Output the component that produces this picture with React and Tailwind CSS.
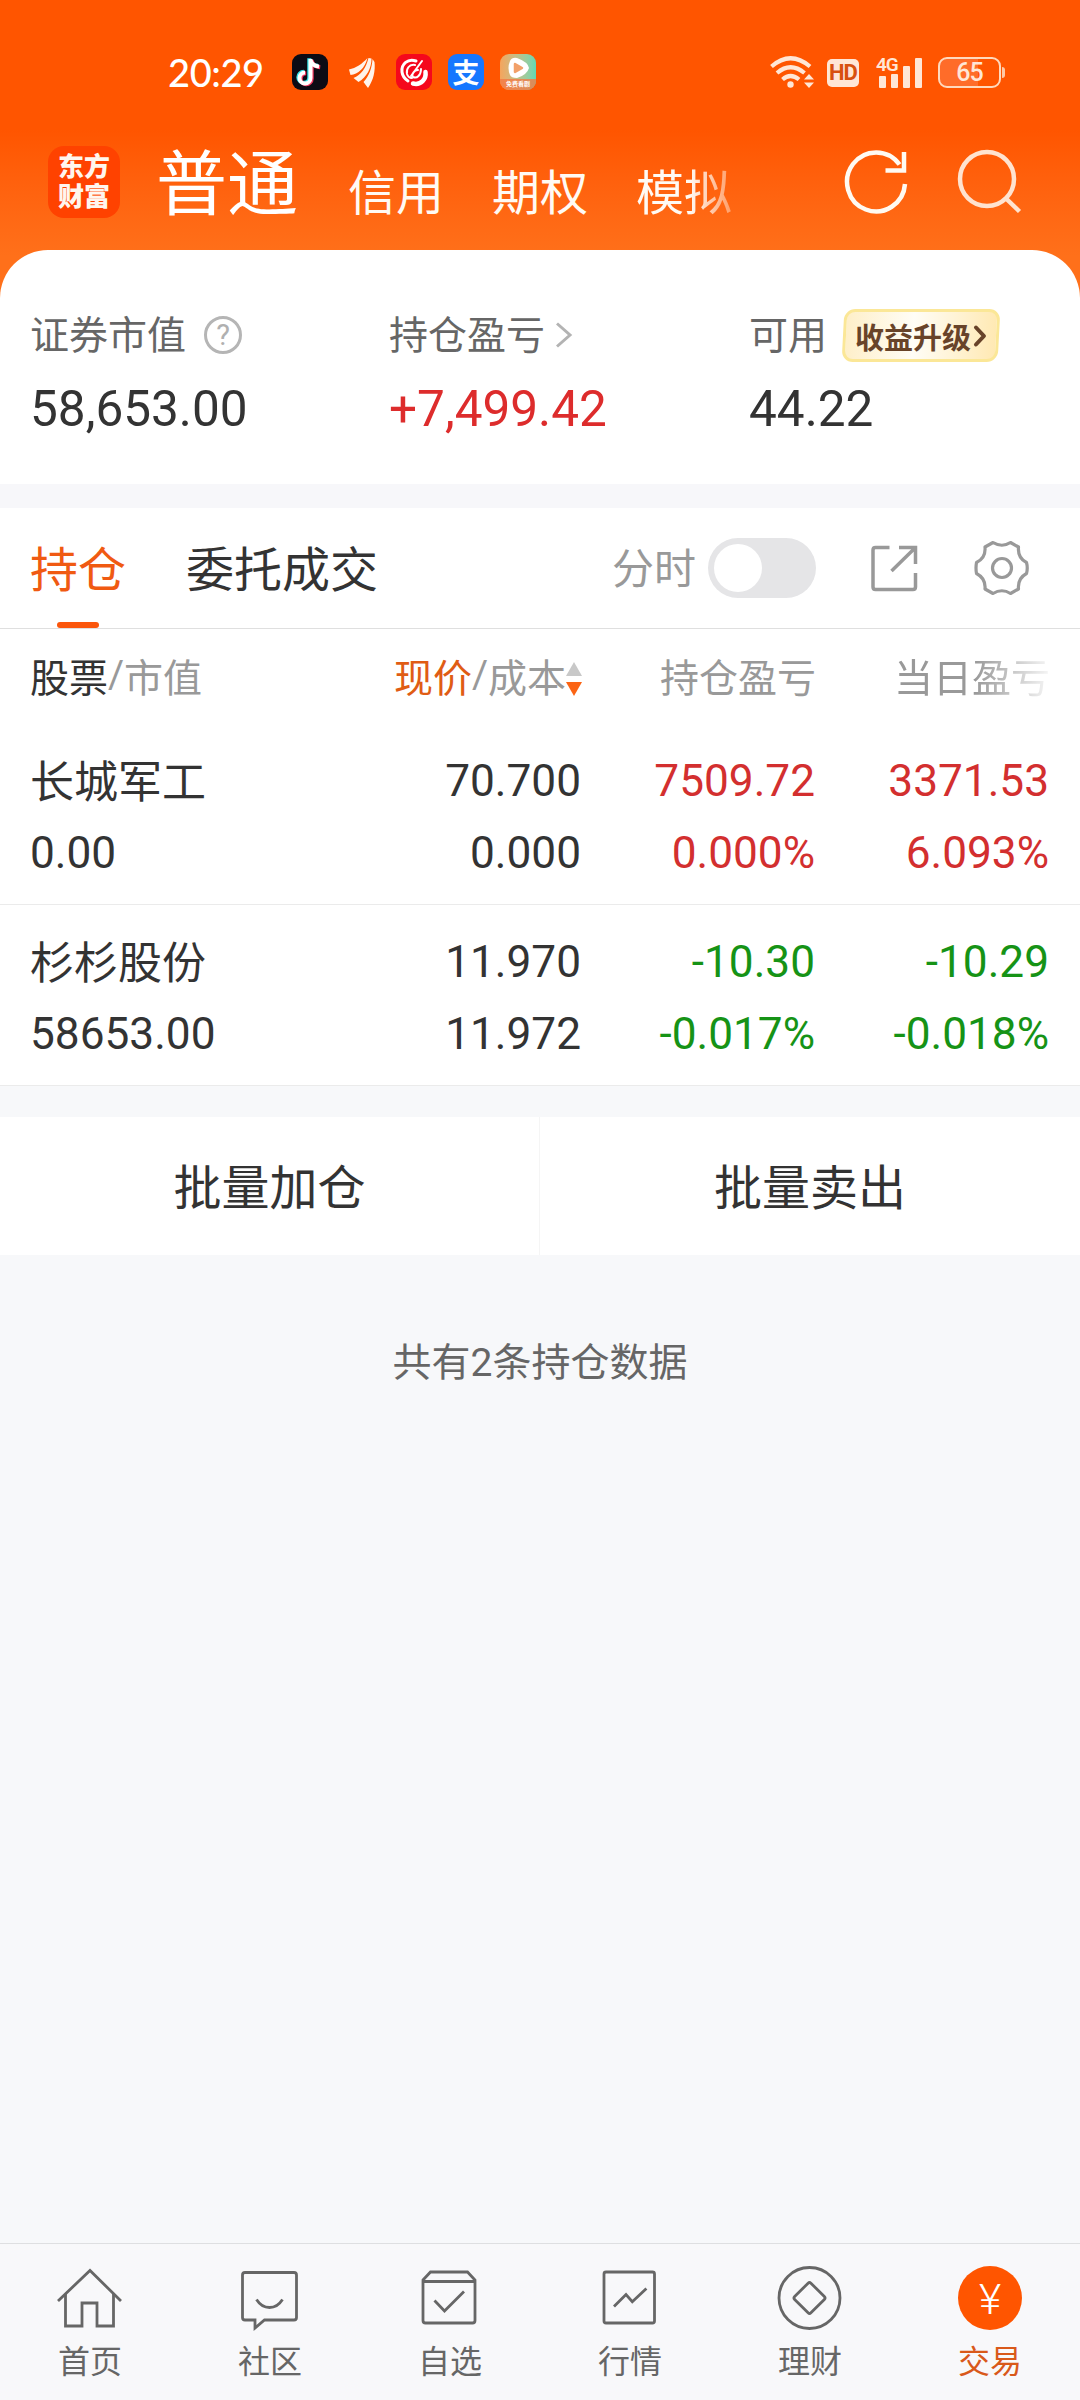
import React, { useState } from 'react';

const holdings = [
  {
    name: '长城军工',
    value: '0.00',
    price: '70.700',
    cost: '0.000',
    profit: '7509.72',
    profitRate: '0.000%',
    day: '3371.53',
    dayRate: '6.093%',
    up: true,
  },
  {
    name: '杉杉股份',
    value: '58653.00',
    price: '11.970',
    cost: '11.972',
    profit: '-10.30',
    profitRate: '-0.017%',
    day: '-10.29',
    dayRate: '-0.018%',
    up: false,
  },
];

function StatusBar() {
  return (
    <div className="flex h-[144px] items-center pl-[168px]">
      <span className="w-[124px] font-[Lato,sans-serif] text-[38px] leading-none font-medium tracking-[-0.4px] text-white">20:29</span>

      <div className="flex items-center">
        <div className="h-9 w-9 rounded-[9px] bg-[#0c0b14]">
          <svg viewBox="0 0 36 36" className="h-9 w-9" fill="none" strokeWidth="4">
            <path d="M18.500 5v19a5.500 5.500 0 1 1-5.500-5.500M18.500 6c1 4 4 6 8.500 6.500" stroke="#35e4e8" transform="translate(-1.200 -.8)" />
            <path d="M18.500 5v19a5.500 5.500 0 1 1-5.500-5.500M18.500 6c1 4 4 6 8.500 6.500" stroke="#f3385f" transform="translate(1.200 .8)" />
            <path d="M18.500 5v19a5.500 5.500 0 1 1-5.500-5.500M18.500 6c1 4 4 6 8.500 6.500" stroke="#fff" />
          </svg>
        </div>

        <svg viewBox="0 0 36 36" className="ml-4 h-9 w-9" fill="#fff3ea">
          <path d="M5 15.500C12 14 18 10 23.500 4C21 14 14 20.500 6.500 21Z" />
          <path d="M9.500 24C17 21 22 14 24.500 4L27.500 4.500C27.500 14 23 23 14.500 28Z" />
          <path d="M19.500 28C25 22 28 14 28.500 5L30.500 8C31.500 17 29.500 26 24 34Z" />
        </svg>

        <div className="ml-4 h-9 w-9 rounded-[9px] bg-[#f5081c]">
          <svg viewBox="0 0 36 36" className="h-9 w-9" fill="none" stroke="#fff" strokeLinecap="round">
            <path d="M20 7C12 4 5 10 6 18C6.500 22 9 25 12 27" strokeWidth="3" />
            <path d="M17 29.500C25 31.500 30.500 25 29.500 18" strokeWidth="4.500" />
            <path d="M19 11C13 10 10 15 11 20C12 23 14 24 16 24" strokeWidth="2" />
            <path d="M26 7L15 22M25 15C25 21 21 25 17 23C15 21 18 16 22 16" strokeWidth="2" />
          </svg>
        </div>

        <div className="ml-4 flex h-9 w-9 items-center justify-center rounded-[9px] bg-[#1677ff] font-['Noto_Sans_CJK_SC',sans-serif] text-[27px] leading-9 font-bold text-white">
          支
        </div>

        <div className="ml-4 flex h-9 w-9 flex-col items-center rounded-[9px] bg-linear-to-r from-[#f5a45c] to-[#5fd8b4]">
          <svg viewBox="0 0 36 25" className="h-[25px] w-9 shrink-0">
            <path d="M10 7Q12 3 17 4Q28 8 29 14Q27 21 17 24Q11 24 10 21Q7 14 10 7Z" fill="#fff" />
            <path d="M15 10L22 14L15 18Z" fill="#f2a069" stroke="#f2a069" strokeWidth="2.500" strokeLinejoin="round" />
          </svg>
          <span className="h-[11px] w-9 rounded-b-[9px] bg-[#f27b46]/80 text-center font-['Noto_Sans_CJK_SC',sans-serif] text-[6px] leading-[10px] font-bold whitespace-nowrap text-white">免费看剧</span>
        </div>
      </div>

      <div className="ml-[233px] flex items-center text-[#ffe6d6]">
        <svg viewBox="0 0 46 36" className="h-9 w-[46px]" fill="none" stroke="currentColor" strokeWidth="4.200">
          <path d="M2.500 12.500Q21.500-4 41 12.500" />
          <path d="M8 19Q21.500 7.500 35.500 19" />
          <path d="M13.500 25.500Q21.500 18.500 30 25.500" />
          <circle cx="21.500" cy="30.500" r="3.200" fill="currentColor" stroke="none" />
          <path d="M35 25.500L40 20L45 25.500ZM35 28.500L40 34L45 28.500Z" fill="currentColor" stroke="none" />
        </svg>
        <span className="mt-[2px] ml-[12px] flex h-7 w-8 items-center justify-center rounded-[5px] bg-[#ffe6d6] font-[Roboto,sans-serif] text-[22px] leading-none font-bold tracking-[-1px] text-[#d8500f]">HD</span>
        <div className="ml-[17px] flex h-8 w-[48px] flex-col">
          <span className="h-[16px] font-[Roboto,sans-serif] text-[19px] leading-[17px] font-semibold tracking-[-1px]">4G</span>
          <div className="-mt-[14px] flex h-[30px] items-end gap-[5.500px] pl-[3px]">
            <i className="h-[12px] w-[6.500px] rounded-[1px] bg-current" />
            <i className="h-[14px] w-[6.500px] rounded-[1px] bg-current" />
            <i className="h-[22px] w-[6.500px] rounded-[1px] bg-current" />
            <i className="h-[30px] w-[6.500px] rounded-[1px] bg-current" />
          </div>
        </div>
        <div className="ml-[14px] flex h-[31px] w-[63px] items-center justify-center rounded-[9px] border-[2.500px] border-[#ffd9bd] bg-linear-to-r from-[#ff6c29] from-65% to-transparent to-65% font-[Roboto,sans-serif] text-[25px] leading-none font-medium tracking-[-1px]">
          65
        </div>
        <i className="ml-px h-[11px] w-[3px] rounded-r bg-[#ffc9a5]" />
      </div>
    </div>
  );
}

function TopNav() {
  return (
    <div className="flex h-[106px] pl-12">
      <div className="mt-0.5 h-[72px] w-[72px] rounded-[16px] bg-[#ff4200] px-[10px] pt-[4px] text-[26px] leading-[30px] font-black text-[#fff6ee]">
        东方财富
      </div>
      <span className="ml-[36px] w-[144px] text-[71px] leading-[69px] text-white">普通</span>
      <div className="ml-[48px] flex w-[440px] gap-12 text-[48px] leading-[90px] text-[#fffaf4]">
        <span>信用</span>
        <span>期权</span>
        <span className="[mask-image:linear-gradient(to_right,#000_56%,rgba(0,0,0,0.4)_98%)]">模拟</span>
      </div>
      <svg viewBox="0 0 72 72" className="ml-[52px] h-[72px] w-[72px]" fill="none" stroke="#fffaf2" strokeWidth="4.500">
        <path d="M65 40A29 29.500 0 1 1 59.500 20.500" />
        <path d="M64 8V26.500H45.500" />
      </svg>
      <svg viewBox="0 0 72 72" className="ml-[40px] h-[72px] w-[72px]" fill="none" stroke="#ffe3cf" strokeWidth="4.500">
        <circle cx="35" cy="35" r="27" />
        <path d="M53.500 54L67.500 67.500" />
      </svg>
    </div>
  );
}

function Summary() {
  return (
    <div className="flex h-[234px] rounded-t-[48px] bg-white pt-[54px] pl-[30px]">
      <div className="w-[359px]">
        <div className="flex h-[58px] items-center text-[39px] text-[#666]">
          <span className="h-[58px] leading-[56px]">证券市值</span>
          <span className="mt-[4px] ml-[18px] flex h-[38px] w-[38px] items-center justify-center rounded-full border-[3px] border-[#b5b5b5] font-[Roboto,sans-serif] text-[29px] leading-none text-[#b0b0b0]">?</span>
        </div>
        <p className="mt-[17px] font-[Roboto,sans-serif] text-[49.500px] leading-[60px] text-[#333]">58,653.00</p>
      </div>
      <div className="w-[360px]">
        <div className="flex h-[58px] items-center text-[39px] text-[#666]">
          <span className="h-[58px] leading-[56px]">持仓盈亏</span>
          <svg viewBox="0 0 18 26" className="mt-[3px] ml-[10px] h-[26px] w-[18px]" fill="none" stroke="#b3b3b3" strokeWidth="3">
            <path d="M2 1.500L15 13L2 24.500" />
          </svg>
        </div>
        <p className="mt-[17px] font-[Roboto,sans-serif] text-[49.500px] leading-[60px] text-[#dd2c2c]">+7,499.42</p>
      </div>
      <div>
        <div className="flex h-[58px] items-center text-[39px] text-[#666]">
          <span className="h-[58px] leading-[56px]">可用</span>
          <div className="mt-[4px] ml-[16px] flex h-[53px] w-[156px] -skew-x-3 items-center rounded-[11px] border-[3px] border-[#fbe797] bg-linear-to-r from-[#feefc9] via-[#fffdf6] via-45% to-[#ffe9b3] pl-[9px]">
            <span className="skew-x-3 text-[29px] leading-[44px] font-bold text-[#684329]">收益升级</span>
            <svg viewBox="0 0 14 24" className="ml-[2px] h-6 w-[14px] skew-x-3" fill="none" stroke="#684329" strokeWidth="4" strokeLinecap="round" strokeLinejoin="round">
              <path d="M3 3.500L11 12L3 20.500" />
            </svg>
          </div>
        </div>
        <p className="mt-[17px] font-[Roboto,sans-serif] text-[49.500px] leading-[60px] text-[#333]">44.22</p>
      </div>
    </div>
  );
}

function Tabs() {
  const [intraday, setIntraday] = useState(false);

  return (
    <div className="flex h-[121px] items-center border-b border-[#dfdfdf] bg-white pl-[30px] text-[48px]">
      <div className="flex h-[120px] flex-col items-center text-[#f05a12]">
        <span className="h-[114px] leading-[116px]">持仓</span>
        <i className="h-[6px] w-[42px] rounded-full bg-[#fb560c]" />
      </div>
      <span className="ml-[60px] h-[120px] leading-[117px] text-[#333]">委托成交</span>
      <span className="ml-[234px] h-[120px] text-[42px] leading-[116px] text-[#999]">分时</span>
      <button
        onClick={() => setIntraday(!intraday)}
        className={`ml-[12px] flex h-[60px] w-[108px] items-center rounded-full px-[6px] ${intraday ? 'justify-end bg-[#fb560c]' : 'bg-[#e5e5e7]'}`}
      >
        <i className="h-12 w-12 rounded-full bg-white" />
      </button>
      <svg viewBox="0 0 48 48" className="ml-[54px] h-12 w-12" fill="none" stroke="#999" strokeWidth="3.500">
        <path d="M19.500 3.500H5.500Q3 3.500 3 6V43Q3 45.500 5.500 45.500H43Q45.500 45.500 45.500 43V29" />
        <path d="M29 3.500H45.500V20M45 4L21.500 27" />
      </svg>
      <svg viewBox="0 0 60 60" className="ml-[54px] h-[60px] w-[60px]" fill="none" stroke="#999" strokeWidth="3.200" strokeLinejoin="round">
        <path d="M21 4.500Q30 10 38.500 4.500L46.500 9Q45.500 20 54.500 24.500Q56 30 54.500 35.500Q45.500 40.500 46.500 51L38.500 55.500Q30 50 21 55.500L13 51Q14 40.500 4.500 35.500Q3.500 30 4.500 24.500Q14 20 13 9Z" />
        <circle cx="30" cy="30" r="9.500" />
      </svg>
    </div>
  );
}

function HoldingTable() {
  return (
    <div className="bg-white">
      <div className="grid h-[95px] grid-cols-[340px_212px_234px_234px] pl-[30px] text-[39px] leading-[93px] text-[#999]">
        <div className="flex whitespace-nowrap">
          <span className="text-[#333]">股票</span>
          <span className="font-[Roboto,sans-serif]">/</span>
          <span>市值</span>
        </div>
        <div className="flex justify-end whitespace-nowrap">
          <span className="text-[#e05c14]">现价</span>
          <span className="font-[Roboto,sans-serif]">/</span>
          <span>成本</span>
          <svg viewBox="0 0 16 36" className="mt-[32px] h-9 w-4 shrink-0">
            <path d="M8 1L16 15H0Z" fill="#c8c8c8" />
            <path d="M8 35L0 21H16Z" fill="#fb6414" />
          </svg>
        </div>
        <div className="text-right">持仓盈亏</div>
        <div className="text-right">
          <span className="[mask-image:linear-gradient(to_right,#000_52%,rgba(0,0,0,0.12)_98%)]">当日盈亏</span>
        </div>
      </div>

      {holdings.map((item) => (
        <div
          key={item.name}
          className="grid h-[181px] grid-cols-[339px_212px_234px_234px] grid-rows-[72px_72px] border-b border-[#ebebeb] pt-[21px] pl-[30px] text-right font-[Roboto,sans-serif] text-[44.200px] leading-[73px] text-[#333]"
        >
          <span className="text-left font-['Noto_Sans_CJK_SC',sans-serif] text-[44px] leading-[68px]">{item.name}</span>
          <span>{item.price}</span>
          <span className={item.up ? 'text-[#d32f2f]' : 'text-[#169316]'}>{item.profit}</span>
          <span className={item.up ? 'text-[#d32f2f]' : 'text-[#169316]'}>{item.day}</span>
          <span className="text-left">{item.value}</span>
          <span>{item.cost}</span>
          <span className={item.up ? 'text-[#d32f2f]' : 'text-[#169316]'}>{item.profitRate}</span>
          <span className={item.up ? 'text-[#d32f2f]' : 'text-[#169316]'}>{item.dayRate}</span>
        </div>
      ))}
    </div>
  );
}

const navItems = [
  {
    label: '首页',
    icon: (
      <>
        <path d="M4 39L36 8.500L67 39" />
        <path d="M11.500 32V64H28V41H43V64H59.500V32" />
      </>
    ),
  },
  {
    label: '社区',
    icon: (
      <>
        <path d="M11 10.500H60Q62.500 10.500 62.500 13V55.500Q62.500 58 60 58H30.500L21 66V58H11Q8.500 58 8.500 55.500V13Q8.500 10.500 11 10.500Z" />
        <path d="M22.500 37.500Q27.500 45.500 35.500 45.500T48.500 37.500" />
      </>
    ),
  },
  {
    label: '自选',
    icon: (
      <>
        <path d="M9 18L16.500 10H53.500L61 18V58.500Q61 61 58.500 61H11.500Q9 61 9 58.500ZM9 19.500H61" />
        <path d="M20.500 38.500L30.500 49L50 29.500" />
      </>
    ),
  },
  {
    label: '行情',
    icon: (
      <>
        <rect x="10" y="10" width="50.500" height="51" rx="2" />
        <path d="M20 44.500L32 32.500L38.300 39.700L52.400 26.500" />
      </>
    ),
  },
  {
    label: '理财',
    icon: (
      <>
        <circle cx="35.500" cy="36" r="30.500" />
        <rect x="24" y="24.500" width="23" height="23" rx="2" transform="rotate(45 35.500 36)" />
      </>
    ),
  },
];

function BottomNav() {
  return (
    <div className="grid h-[157px] grid-cols-6 border-t border-[#dedfe1] bg-[#f8f8fa] pt-[18px] text-[32px] leading-[48px] text-[#666]">
      {navItems.map((item) => (
        <div key={item.label} className="flex flex-col items-center">
          <svg viewBox="0 0 72 72" className="h-[72px] w-[72px]" fill="none" stroke="#666" strokeWidth="2.800">
            {item.icon}
          </svg>
          <span className="mt-[1px]">{item.label}</span>
        </div>
      ))}
      <div className="flex flex-col items-center text-[#d9591a]">
        <div className="my-1 flex h-16 w-16 items-center justify-center rounded-full bg-[#ff5500] pt-[3px] font-[Roboto,sans-serif] text-[43px] leading-none font-light text-white">¥</div>
        <span className="mt-[1px]">交易</span>
      </div>
    </div>
  );
}

function App() {
  return (
    <div className="flex h-[2400px] w-[1080px] flex-col overflow-hidden bg-[#f7f8fa] font-['Noto_Sans_CJK_SC',sans-serif]">
      <div className="bg-linear-to-b from-[#ff5500] from-[130px] to-[#ff701a] to-[256px]">
        <StatusBar />
        <TopNav />
        <Summary />
      </div>

      <div className="h-6 bg-[#f7f7fa]" />
      <Tabs />
      <HoldingTable />

      <div className="mt-[31px] grid h-[138px] grid-cols-2 bg-white text-center text-[48px] leading-[135px] text-[#333]">
        <span className="border-r border-[#f5f5f5]">批量加仓</span>
        <span>批量卖出</span>
      </div>

      <p className="mt-[74px] text-center text-[39px] leading-[60px] text-[#666]">
        共有<span className="font-[Roboto,sans-serif]">2</span>条持仓数据
      </p>

      <div className="flex-1" />
      <BottomNav />
    </div>
  );
}

export default App;
